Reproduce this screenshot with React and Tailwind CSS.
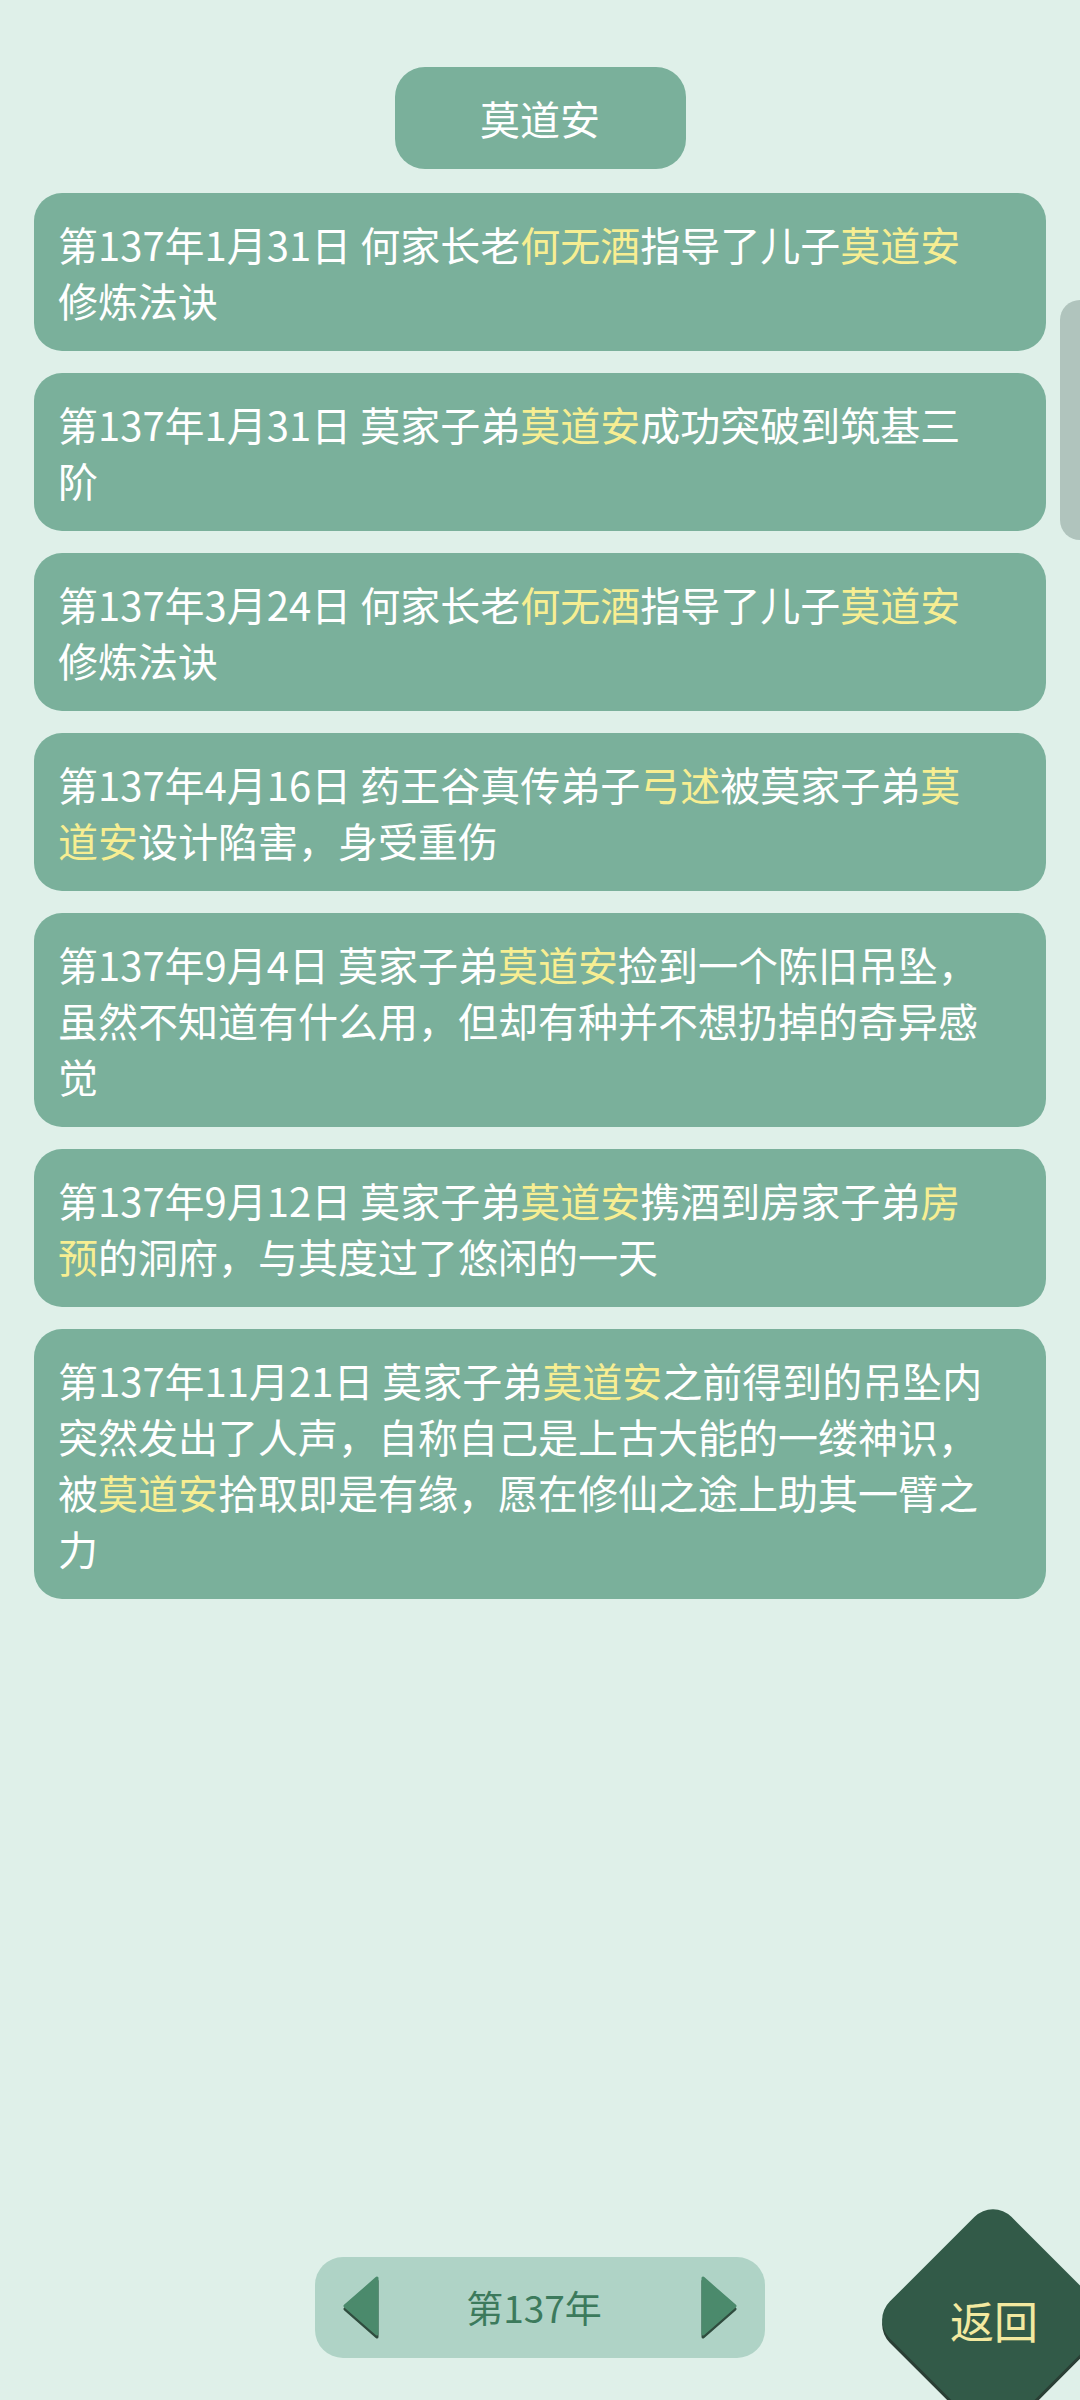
import React from 'react';

const font = { fontFamily: '"Noto Sans CJK SC", "Noto Sans", sans-serif' };

// each entry: array of [text, highlighted]
const events = [
  [['第137年1月31日 何家长老', false], ['何无酒', true], ['指导了儿子', false], ['莫道安', true], ['修炼法诀', false]],
  [['第137年1月31日 莫家子弟', false], ['莫道安', true], ['成功突破到筑基三阶', false]],
  [['第137年3月24日 何家长老', false], ['何无酒', true], ['指导了儿子', false], ['莫道安', true], ['修炼法诀', false]],
  [['第137年4月16日 药王谷真传弟子', false], ['弓述', true], ['被莫家子弟', false], ['莫道安', true], ['设计陷害，身受重伤', false]],
  [['第137年9月4日 莫家子弟', false], ['莫道安', true], ['捡到一个陈旧吊坠，虽然不知道有什么用，但却有种并不想扔掉的奇异感觉', false]],
  [['第137年9月12日 莫家子弟', false], ['莫道安', true], ['携酒到房家子弟', false], ['房预', true], ['的洞府，与其度过了悠闲的一天', false]],
  [['第137年11月21日 莫家子弟', false], ['莫道安', true], ['之前得到的吊坠内突然发出了人声，自称自己是上古大能的一缕神识，被', false], ['莫道安', true], ['拾取即是有缘，愿在修仙之途上助其一臂之力', false]],
];

function Arrow({ dir }) {
  const pts = dir === 'left' ? '36,2 36,58 4,30' : '2,2 2,58 34,30';
  return (
    <svg width="38" height="63" viewBox="0 0 38 63">
      <polygon points={pts} transform="translate(0,3)" fill="#2f4c3e" stroke="#2f4c3e" strokeWidth="3" strokeLinejoin="round" />
      <polygon points={pts} fill="#4b8a6c" stroke="#4b8a6c" strokeWidth="3" strokeLinejoin="round" />
    </svg>
  );
}

export default function App() {
  return (
    <div className="relative h-[2400px] w-[1080px] overflow-hidden bg-[#dff0e9]" style={font}>
      <div className="flex flex-col items-center pt-[67px]">
        <div className="flex h-[102px] w-[291px] items-center justify-center rounded-[30px] bg-[#7ab09b] text-[40px] text-white">
          莫道安
        </div>
      </div>

      <div className="mt-[24px] flex flex-col gap-[22px] px-[34px]">
        {events.map((parts, i) => (
          <div key={i} className="rounded-[28px] bg-[#7ab09b] pl-[24px] pr-[48px] pt-[23px] pb-[23px]">
            <p className="text-[40px] leading-[56px] text-white">
              {parts.map(([t, hl], j) => (
                <span key={j} className={hl ? 'text-[#f7ee92]' : ''}>{t}</span>
              ))}
            </p>
          </div>
        ))}
      </div>

      {/* scroll indicator */}
      <div className="absolute right-0 top-[300px] h-[240px] w-[20px] rounded-l-[20px] bg-[#b0c4bd]" />

      {/* year pager */}
      <div className="absolute left-[315px] top-[2257px] flex h-[101px] w-[450px] items-center justify-between rounded-[28px] bg-[#afd3c6] px-[26px]">
        <Arrow dir="left" />
        <span className="mr-[12px] text-[37px] text-[#3c7a5c]">第137年</span>
        <Arrow dir="right" />
      </div>

      {/* back button */}
      <div className="absolute left-[907px] top-[2234px] h-[172px] w-[172px] rotate-45 rounded-[26px] bg-[#325a48] shadow-[3px_3px_0_#2a3f35]" />
      <div className="absolute left-[950px] top-[2292px] text-[44px] leading-[56px] text-[#f3e9a0]">返回</div>
    </div>
  );
}
